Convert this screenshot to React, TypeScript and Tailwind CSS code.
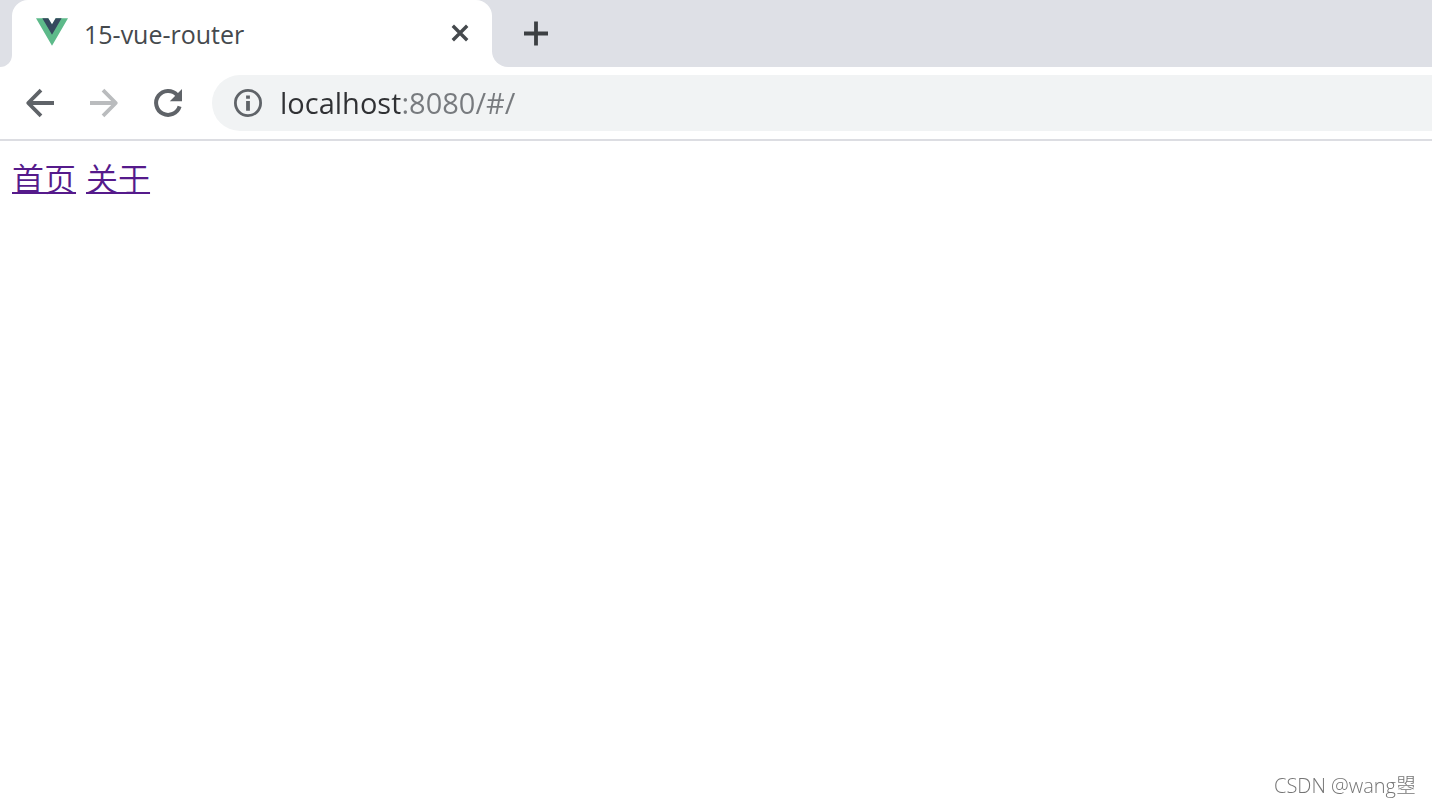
const links = [
  { title: "首页", href: "#/" },
  { title: "关于", href: "#/about" },
];

const VueLogo = () => (
  <svg viewBox="0 0 256 221" className="mb-1 h-7 w-8 shrink-0" aria-hidden="true">
    <path fill="#5dba8a" d="M204.8 0H256L128 220.8 0 0h97.92L128 51.2 157.44 0z" />
    <path fill="#35495e" d="M50.56 0 128 133.12 204.8 0h-47.36L128 51.2 97.92 0z" />
  </svg>
);

const CloseIcon = () => (
  <svg viewBox="0 0 32 32" className="mb-1 size-8" fill="none" stroke="currentColor" strokeWidth="3.4" aria-hidden="true">
    <path d="M8.8 9.8 23.2 24.2M23.2 9.8 8.8 24.2" />
  </svg>
);

const PlusIcon = () => (
  <svg viewBox="0 0 40 40" className="size-10" fill="none" stroke="currentColor" strokeWidth="3.8" aria-hidden="true">
    <path d="M20 7.5v24M8 19.5h24" />
  </svg>
);

const ArrowIcon = ({ className = "" }) => (
  <svg viewBox="0 0 40 40" className={`size-10 ${className}`} fill="none" stroke="currentColor" strokeWidth="3.8" aria-hidden="true">
    <path d="M34 20H8M21 7.2 8.2 20 21 32.8" strokeLinejoin="round" />
  </svg>
);

const ReloadIcon = () => (
  <svg viewBox="0 0 40 40" className="size-10" fill="none" aria-hidden="true">
    <path d="M29 11.8A12 12 0 1 0 31.6 23.4" stroke="currentColor" strokeWidth="4" />
    <path d="M34 6v12.2H21.8z" fill="currentColor" />
  </svg>
);

const InfoIcon = () => (
  <svg viewBox="0 0 32 32" className="size-8 shrink-0" fill="none" aria-hidden="true">
    <circle cx="16" cy="16" r="12.6" stroke="currentColor" strokeWidth="2.8" />
    <path d="M14.1 8.4h3.8v3.4h-3.8zM14.1 14h3.8v9.8h-3.8z" fill="currentColor" />
  </svg>
);

const TabStrip = () => {
  return (
    <div className="flex h-[67px] bg-white">
      <div className="w-3 rounded-br-2xl bg-[#dee0e6]"></div>
      {/* grey only behind the top half, so the tab flows into the toolbar */}
      <div className="w-[480px] bg-linear-to-b from-[#dee0e6] from-50% to-white to-50%">
        <div className="flex h-full items-center rounded-t-2xl bg-white pl-6 pr-4">
          <VueLogo />
          <span className="flex-1 pl-4 text-[25px] leading-8 text-[#45494d]">15-vue-router</span>
          <button aria-label="Close tab" className="text-[#45494d]">
            <CloseIcon />
          </button>
        </div>
      </div>
      <div className="flex flex-1 items-center rounded-bl-2xl bg-[#dee0e6] pl-6">
        <button aria-label="New tab" className="text-[#3c4043]">
          <PlusIcon />
        </button>
      </div>
    </div>
  );
};

const Toolbar = () => {
  return (
    <div className="flex items-center border-b-2 border-[#dcdde2] bg-white py-2 pl-5 text-[#5f6368]">
      <div className="flex gap-6">
        <button aria-label="Back">
          <ArrowIcon />
        </button>
        <button aria-label="Forward" disabled className="text-[#babcbe]">
          <ArrowIcon className="rotate-180" />
        </button>
        <button aria-label="Reload">
          <ReloadIcon />
        </button>
      </div>
      <div className="ml-6 flex h-14 flex-1 items-center rounded-l-full bg-[#f1f3f4] pl-5">
        <InfoIcon />
        {/* host is dark, port and path are lighter */}
        <input
          aria-label="Address"
          defaultValue="localhost:8080/#/"
          className="ml-4 h-10 min-w-0 flex-1 bg-linear-to-r from-[#303134] from-[120px] to-[#777a7e] to-[120px] bg-clip-text text-[29px] text-transparent caret-black outline-none"
        />
      </div>
    </div>
  );
};

export default function App() {
  return (
    <div className="min-h-screen bg-white font-['Open_Sans','Noto_Sans_CJK_SC',sans-serif]">
      <TabStrip />
      <Toolbar />
      <nav className="flex gap-[10px] px-3 pt-3 font-['Noto_Sans_CJK_SC',sans-serif] text-[32px] leading-[48px] font-[350] text-[#551a8b]">
        {links.map((item) => (
          <a key={item.href} href={item.href} className="underline decoration-2">
            {item.title}
          </a>
        ))}
      </nav>
      <p className="fixed right-4 bottom-2 text-xl leading-6 font-light text-[#757575]">CSDN @wang曌</p>
    </div>
  );
}
